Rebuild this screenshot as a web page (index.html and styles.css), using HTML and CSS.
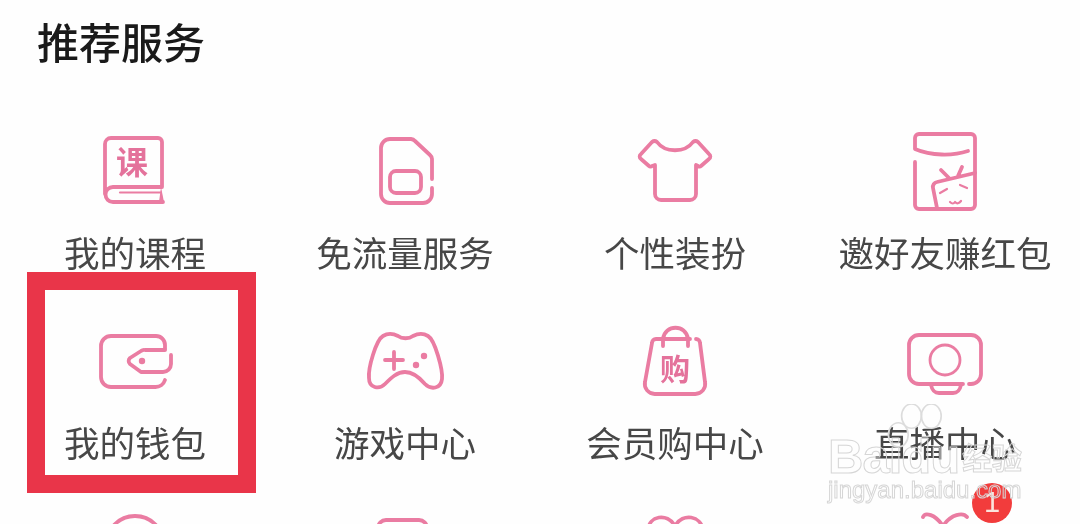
FILE: index.html
```html
<!DOCTYPE html>
<html lang="zh-CN">
  <head>
    <meta charset="utf-8" />
    <title>推荐服务</title>
    <link rel="stylesheet" href="styles.css">
  </head>
  <body>
    <div class="page">
      <h1 class="title">推荐服务</h1>

      <div class="services">
        <div class="service">
          <svg class="icon" viewBox="0 0 80 80">
            <path d="M10 62V12a6 6 0 0 1 6-6H63a4 4 0 0 1 4 4V55H18a7.500 7.500 0 0 0 0 15H68" />
            <path class="thin" d="M25 60.500H66" />
            <path class="fill" d="M66 55l3 15h-5z" />
            <text class="icon-char" x="37" y="42" font-size="32">课</text>
          </svg>
          <p class="label">我的课程</p>
        </div>

        <div class="service">
          <svg class="icon" viewBox="0 0 80 80">
            <path d="M67 47V27a6 6 0 0 0-2-4L50 9a6 6 0 0 0-4-2H25a9 9 0 0 0-9 9V62a9 9 0 0 0 9 9H58a9 9 0 0 0 9-9V56" />
            <rect x="25" y="39" width="31" height="22" rx="6" />
          </svg>
          <p class="label">免流量服务</p>
        </div>

        <div class="service">
          <svg class="icon" viewBox="0 0 80 80">
            <path d="M17 10a4 4 0 0 1 5 0C30 21 50 21 58 10a4 4 0 0 1 5 0L74 22a3 3 0 0 1 0 5L66 34a2 2 0 0 1-3 0L61 33V62a6 6 0 0 1-6 6H26a6 6 0 0 1-6-6V33L17 34a2 2 0 0 1-3 0L6 27a3 3 0 0 1 0-5Z" />
          </svg>
          <p class="label">个性装扮</p>
        </div>

        <div class="service">
          <svg class="icon" viewBox="0 0 80 80">
            <path d="M63 19C48 24 26 24 10 17V6a4 4 0 0 1 4-4H66a4 4 0 0 1 4 4V73a4 4 0 0 1-4 4H14a4 4 0 0 1-4-4V30" />
            <path d="M32 76L28 56a5 5 0 0 1 4-6L70 41M36 38l8 8M57 35l-4 9" />
            <path class="thin" d="M35 61l7-4M55 53l7 3M45 70q3 3 5 0q3 3 6-1" />
          </svg>
          <p class="label">邀好友赚红包</p>
        </div>

        <div class="service">
          <svg class="icon" viewBox="0 0 80 80">
            <path d="M70 27V23a9 9 0 0 0-9-9H16a10 10 0 0 0-10 10V55a10 10 0 0 0 10 10H60a10 10 0 0 0 10-7" />
            <path d="M70 28H50a5 5 0 0 0-4 1L35 36a4 4 0 0 0 0 6L46 50H68a8 8 0 0 0 8-8V33" />
            <circle class="fill" cx="47" cy="39" r="3.200" />
          </svg>
          <p class="label">我的钱包</p>
        </div>

        <div class="service">
          <svg class="icon" viewBox="0 0 80 80">
            <path d="M18 14C23 11 29 12 33 14C37 17 44 17 48 14C52 12 58 11 63 14C70 18 78 48 77 57C76 67 66 68 60 62C54 55 48 50 40 50C32 50 26 56 20 62C14 68 4 66 4 56C3 46 11 18 18 14Z" />
            <path d="M29 30V47M20 38H38" />
            <circle class="fill" cx="59" cy="34" r="3.200" />
            <circle class="fill" cx="51" cy="43" r="3.200" />
          </svg>
          <p class="label">游戏中心</p>
        </div>

        <div class="service">
          <svg class="icon" viewBox="0 0 80 80">
            <path d="M55 17H21a4 4 0 0 0-4 4L10 60a10 10 0 0 0 10 12H60a10 10 0 0 0 10-12L65 21a4 4 0 0 0-4-4" />
            <path d="M28 24V17C30 2 51 2 53 17V24" />
            <text class="icon-char" x="40" y="58" font-size="30">购</text>
          </svg>
          <p class="label">会员购中心</p>
        </div>

        <div class="service">
          <svg class="icon" viewBox="0 0 80 80">
            <path d="M58 62H14a10 10 0 0 1-10-10V23a10 10 0 0 1 10-10H66a10 10 0 0 1 10 10V52a10 10 0 0 1-10 10H64" />
            <circle class="mid" cx="40" cy="38" r="15" />
            <path d="M26 63c1 5 4 8 8 8H48c4 0 7-3 8-8" />
          </svg>
          <p class="label">直播中心</p>
        </div>

        <div class="service">
          <svg class="icon" viewBox="0 0 80 80">
            <circle cx="40" cy="33" r="29" />
          </svg>
        </div>

        <div class="service">
          <svg class="icon" viewBox="0 0 80 80">
            <rect x="13" y="8" width="49" height="60" rx="8" />
          </svg>
        </div>

        <div class="service">
          <svg class="icon" viewBox="0 0 80 80">
            <path d="M40 14C32 0 14 4 13 18M40 14C48 0 66 4 68 18" />
          </svg>
        </div>

        <div class="service">
          <svg class="icon" viewBox="0 0 80 80">
            <path d="M38 14C30 2 20 0 18 5M38 14C46 2 58 0 62 5" />
          </svg>
        </div>
      </div>

      <!-- highlight drawn over the wallet item -->
      <div class="highlight"></div>

      <div class="badge">1</div>

      <div class="watermark">
        <svg class="paw" viewBox="0 0 60 50">
          <ellipse cx="13" cy="28" rx="9" ry="11" />
          <ellipse cx="25" cy="11" rx="9" ry="11" />
          <ellipse cx="43" cy="11" rx="9" ry="11" />
        </svg>
        <div class="mark-main"><span class="mark-bai">Baidu</span><span class="mark-cn">经验</span></div>
        <div class="mark-url">jingyan.baidu.com</div>
      </div>
    </div>
  </body>
</html>
```

FILE: styles.css
```css
html,
body {
  margin: 0;
  padding: 0;
  background: #fefefe;
}

.page {
  position: relative;
  width: 1080px;
  height: 524px;
  overflow: hidden;
  font-family: "Noto Sans CJK SC", "Noto Sans", sans-serif;
  filter: blur(0.4px);
}

.title {
  margin: 0 0 46px;
  padding-left: 37px;
  height: 82px;
  line-height: 82px;
  font-size: 42px;
  font-weight: 500;
  color: #1a1a1a;
  padding-bottom: 4px;
}

.services {
  display: grid;
  grid-template-columns: repeat(4, 270px);
  grid-auto-rows: 190px;
}

.service {
  display: flex;
  flex-direction: column;
  align-items: center;
}

.icon {
  width: 80px;
  height: 80px;
  flex: none;
  fill: none;
  stroke: #ea7ca2;
  stroke-width: 3.800;
  stroke-linecap: round;
  stroke-linejoin: round;
}

.icon .thin {
  stroke-width: 2.200;
}

.icon .mid {
  stroke-width: 2.800;
}

.icon .fill {
  fill: #ea7ca2;
  stroke: none;
}

.icon-char {
  fill: #e4729b;
  stroke: none;
  font-weight: 700;
  text-anchor: middle;
}

.label {
  margin: 18px 0 0;
  line-height: 44px;
  font-size: 35.500px;
  color: #474747;
  white-space: nowrap;
}

.highlight {
  position: absolute;
  left: 27px;
  top: 272px;
  width: 193px;
  height: 185px;
  border: 18px solid #e93549;
}

.badge {
  position: absolute;
  left: 972px;
  top: 483px;
  width: 40px;
  height: 40px;
  border-radius: 50%;
  background: #f23c3c;
  color: #fbe3dc;
  font-family: "Liberation Sans", sans-serif;
  font-size: 29px;
  line-height: 38px;
  text-align: center;
}

.watermark {
  position: absolute;
  left: 828px;
  top: 410px;
  width: 200px;
  height: 96px;
  color: transparent;
  -webkit-text-stroke: 1px #d6d6d6;
}

.paw {
  position: absolute;
  left: 56px;
  top: -6px;
  width: 66px;
  height: 55px;
  fill: none;
  stroke: #dcdcdc;
  stroke-width: 1.500;
}

.mark-main {
  position: absolute;
  left: 0;
  top: 18px;
  display: flex;
  align-items: center;
  gap: 3px;
  white-space: nowrap;
}

.mark-bai {
  font-family: "Liberation Sans", sans-serif;
  font-size: 49px;
  font-weight: 700;
  line-height: 56px;
  letter-spacing: -1px;
}

.mark-cn {
  font-size: 30px;
  line-height: 56px;
  font-weight: 700;
}

.mark-url {
  position: absolute;
  left: 0;
  top: 66px;
  font-family: "Liberation Sans", sans-serif;
  font-size: 24px;
  line-height: 28px;
  white-space: nowrap;
}
```
